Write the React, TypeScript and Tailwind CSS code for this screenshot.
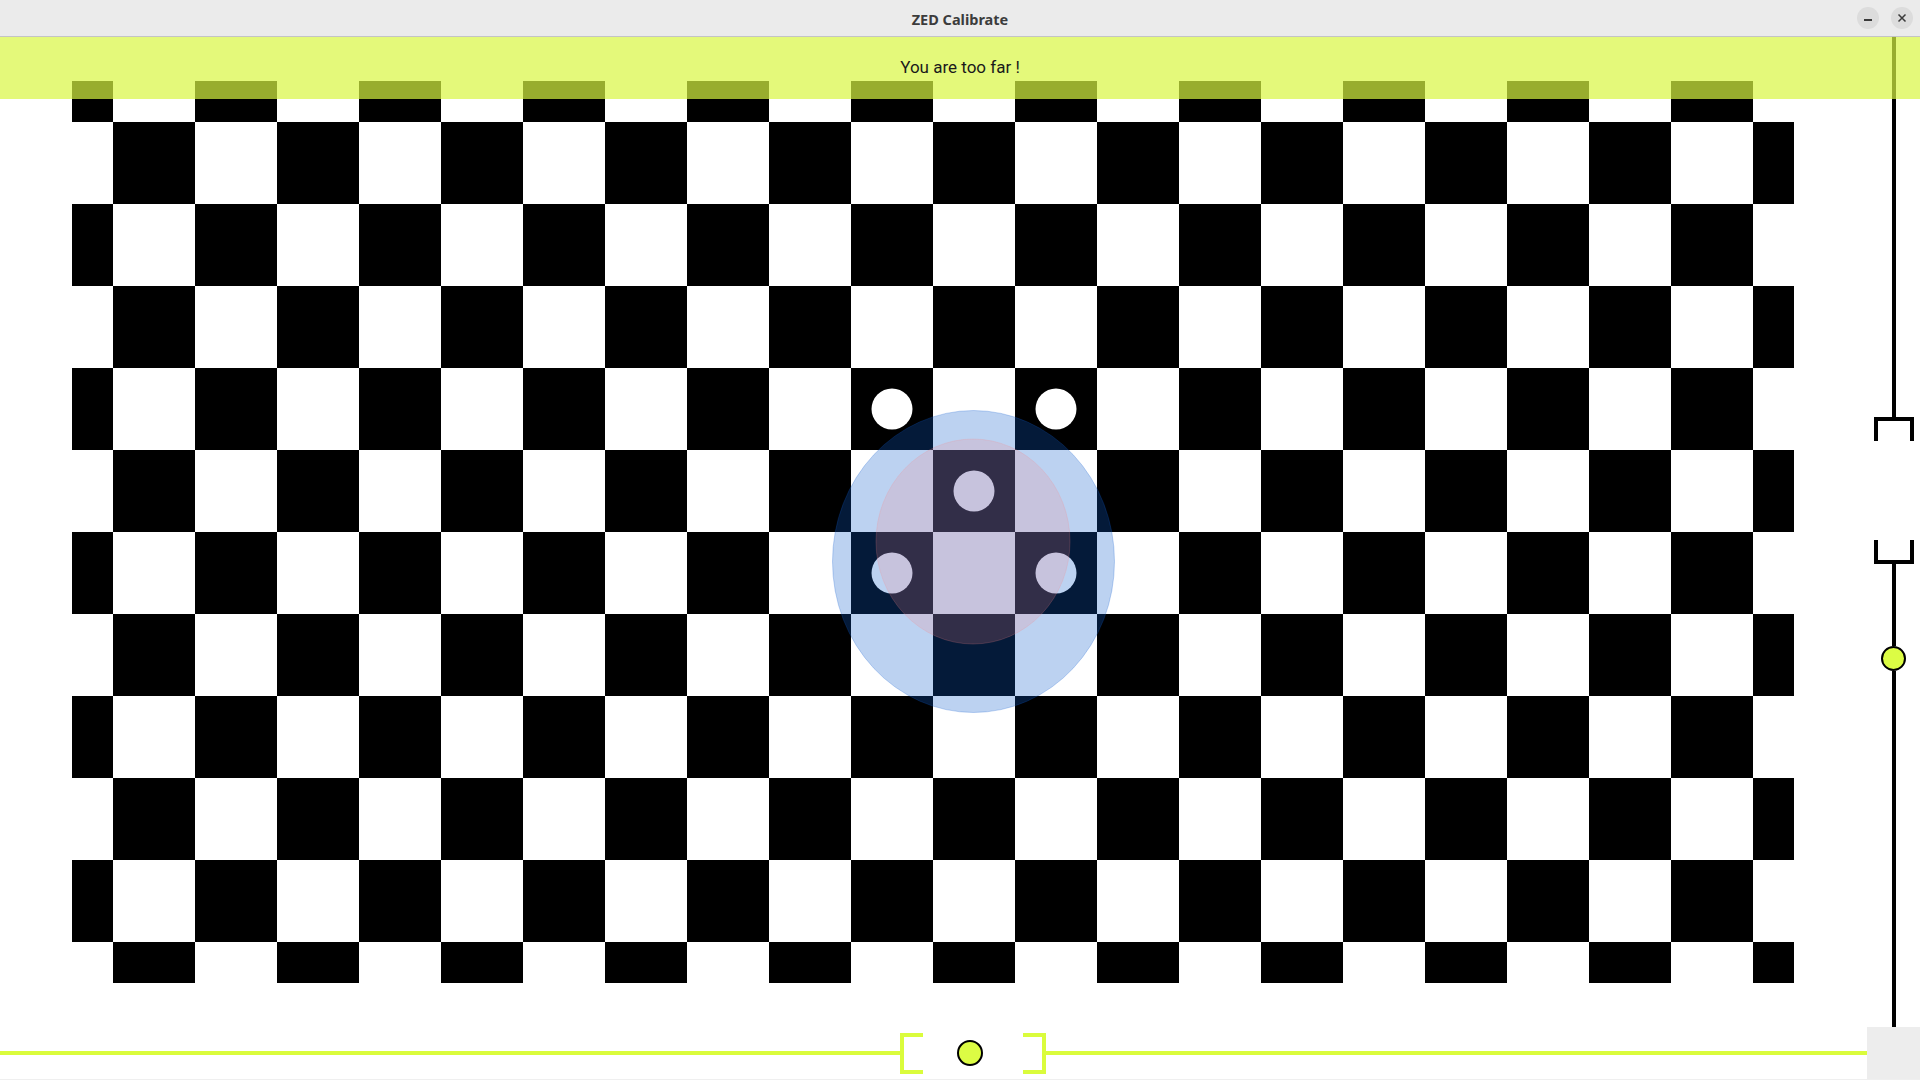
import React from "react";

const SQ = 82;

function Board() {
  const rects: React.ReactElement[] = [];
  for (let i = 0; i < 22; i++) {
    for (let j = 0; j < 12; j++) {
      if ((i + j) % 2 === 0) {
        rects.push(
          <rect key={`${i}-${j}`} x={-41 + SQ * i} y={-41 + SQ * j} width={SQ} height={SQ} fill="#000" />
        );
      }
    }
  }
  const dots: [number, number][] = [
    [820, 328],
    [984, 328],
    [902, 410],
    [820, 492],
    [984, 492],
  ];
  return (
    <svg width={1722} height={902} viewBox="0 0 1722 902" className="block" shapeRendering="crispEdges">
      <rect x={0} y={0} width={1722} height={902} fill="#fff" />
      {rects}
      <g shapeRendering="geometricPrecision">
        {dots.map(([x, y]) => (
          <circle key={`${x}-${y}`} cx={x} cy={y} r={20.5} fill="#fff" />
        ))}
        <ellipse cx={901.5} cy={480.5} rx={141} ry={151} fill="rgba(14,92,206,0.28)" stroke="rgba(14,92,206,0.25)" strokeWidth={1} />
        <ellipse cx={901} cy={460.5} rx={97} ry={102.5} fill="rgba(251,135,136,0.19)" stroke="rgba(251,135,136,0.2)" strokeWidth={1} />
      </g>
    </svg>
  );
}

export default function App() {
  return (
    <div className="w-[1920px] h-[1080px] flex flex-col bg-white overflow-hidden">
      {/* Title bar */}
      <div className="h-[37px] shrink-0 bg-[#ebebeb] border-b border-[#c4c4c4] flex items-center relative">
        <div className="flex-1 text-center font-['Noto_Sans',sans-serif] font-bold text-[14.5px] text-[#3c3c3c] leading-none pt-[2px]">
          ZED Calibrate
        </div>
        <div className="absolute right-[7px] top-[7px] flex gap-[12px]">
          <div className="w-[22px] h-[22px] rounded-full bg-[#dcdcdc] flex items-center justify-center">
            <div className="w-[8px] h-[1.5px] bg-[#3a3a3a] mt-[4px]" />
          </div>
          <div className="w-[22px] h-[22px] rounded-full bg-[#dcdcdc] flex items-center justify-center">
            <svg width="10" height="10" viewBox="0 0 10 10">
              <path d="M1.5 1.5 L8.5 8.5 M8.5 1.5 L1.5 8.5" stroke="#3a3a3a" strokeWidth="1.5" />
            </svg>
          </div>
        </div>
      </div>

      {/* Main */}
      <div className="relative flex-1 flex flex-col">
        <div className="flex h-[990px]">
          <div className="flex-1 pl-[72px] pt-[44px]">
            <Board />
          </div>
          {/* Right vertical slider */}
          <div className="w-[53px] flex flex-col items-center">
            <div className="w-[4px] h-[380px] bg-black" />
            <div className="w-[40px] h-[24px] border-[4px] border-b-0 border-black" />
            <div className="h-[99px]" />
            <div className="w-[40px] h-[24px] border-[4px] border-t-0 border-black" />
            <div className="w-[4px] h-[82px] bg-black" />
            <div className="w-[25px] h-[25px] rounded-full bg-[#dcfc44] border-[2.5px] border-black" />
            <div className="w-[4px] flex-1 bg-black" />
          </div>
        </div>

        {/* Bottom horizontal slider */}
        <div className="h-[53px] flex items-center border-b border-[#efefef]">
          <div className="w-[900px] h-[4px] bg-[#dafc3c]" />
          <div className="w-[23px] h-[41px] border-[4px] border-r-0 border-[#dafc3c]" />
          <div className="w-[100px] flex items-center">
            <div className="ml-[34px] w-[26px] h-[26px] rounded-full bg-[#dcfc44] border-[2.5px] border-black" />
          </div>
          <div className="w-[23px] h-[41px] border-[4px] border-l-0 border-[#dafc3c]" />
          <div className="flex-1 h-[4px] bg-[#dafc3c]" />
          <div className="w-[53px] h-full bg-[#ededed]" />
        </div>

        {/* Banner overlay */}
        <div className="absolute left-0 right-0 top-0 h-[62px] bg-[rgba(216,247,66,0.7)] flex items-center justify-center">
          <span className="font-['Roboto',sans-serif] text-[17px] text-[#1a1a1a] leading-none mb-[2px]">You are too far !</span>
        </div>
      </div>
    </div>
  );
}
